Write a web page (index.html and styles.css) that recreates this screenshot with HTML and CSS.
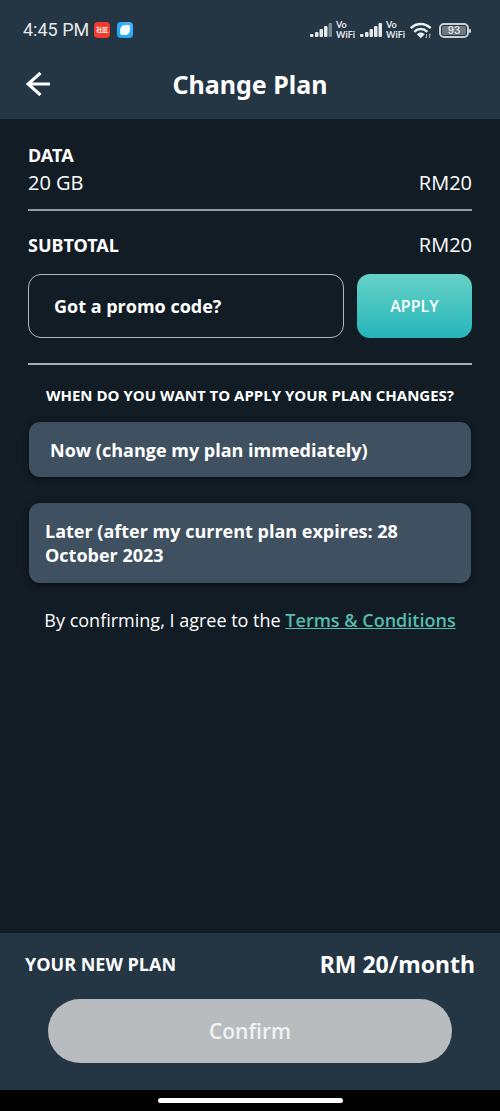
FILE: index.html
```html
<!DOCTYPE html>
<html lang="en">
<head>
<meta charset="utf-8">
<meta name="viewport" content="width=device-width, initial-scale=1">
<title>Change Plan</title>
<link rel="stylesheet" href="styles.css">
</head>
<body>
<div class="screen">
  <header class="top">
    <div class="status">
      <span class="clock">4:45 PM</span>
      <span class="badge">社区</span>
      <svg class="app" viewBox="0 0 16 16" aria-hidden="true">
        <defs><linearGradient id="blue" x1="0" y1="1" x2="1" y2="0"><stop offset="0" stop-color="#0fa6f8"/><stop offset="1" stop-color="#4bb4fa"/></linearGradient></defs>
        <rect width="16" height="16" rx="4" fill="url(#blue)"/>
        <path d="M3 8.500C3 5 5.500 3 8.500 3H11.500Q13 3 13 4.500V7.500C13 11 11 13 7.800 13H5Q3 13 3 11Z" fill="#f4fbff"/>
      </svg>
      <div class="indicators">
        <svg class="signal" viewBox="0 0 22 14" aria-hidden="true">
          <g fill="#e4e8ea"><rect y="11" width="3.500" height="3" rx="1"/><rect x="5" y="9" width="3.500" height="5" rx="1"/><rect x="9.500" y="6" width="3.500" height="8" rx="1"/><rect x="14" y="3" width="3.500" height="11" rx="1"/></g>
          <rect x="18.500" width="3.500" height="14" rx="1" fill="#788690"/>
        </svg>
        <span class="vo">Vo<br>WiFi</span>
        <svg class="signal" viewBox="0 0 22 14" aria-hidden="true">
          <g fill="#e4e8ea"><rect y="11" width="3.500" height="3" rx="1"/><rect x="5" y="9" width="3.500" height="5" rx="1"/><rect x="9.500" y="6" width="3.500" height="8" rx="1"/><rect x="14" y="3" width="3.500" height="11" rx="1"/><rect x="18.500" width="3.500" height="14" rx="1"/></g>
        </svg>
        <span class="vo">Vo<br>WiFi</span>
        <svg class="wifi" viewBox="0 0 22 17" aria-hidden="true">
          <g fill="none" stroke="#e8ecee" stroke-width="2.500"><path d="M.8 6.200C6.500.6 15 .6 20.700 6.200"/><path d="M4.200 9.800C8 6.200 13.500 6.200 17.300 9.800"/></g>
          <path d="M6.800 12.200C9.300 10 12.200 10 14.700 12.200L10.800 16.200Z" fill="#e8ecee"/>
          <path d="M16.500 12V16M15.500 15L16.500 16.200M19.500 16V12L21 13.300" fill="none" stroke="#a5afb6"/>
        </svg>
        <span class="battery"><span class="cell">93</span></span>
      </div>
    </div>
    <div class="bar">
      <button class="back" type="button" aria-label="Back">
        <svg viewBox="0 0 26 26" aria-hidden="true"><path d="M25 13H3M15.500 2L3 13L15.500 24" fill="none" stroke="#fff" stroke-width="3"/></svg>
      </button>
      <h1>Change Plan</h1>
    </div>
  </header>
  <main>
    <section class="data">
      <h2>DATA</h2>
      <div class="row"><span>20 GB</span><span>RM20</span></div>
    </section>
    <section class="subtotal">
      <div class="row"><h2>SUBTOTAL</h2><span>RM20</span></div>
      <form class="promo">
        <input type="text" placeholder="Got a promo code?" aria-label="Got a promo code?">
        <button type="button">APPLY</button>
      </form>
    </section>
    <section class="when">
      <h3>WHEN DO YOU WANT TO APPLY YOUR PLAN CHANGES?</h3>
      <button class="option now" type="button">Now (change my plan immediately)</button>
      <button class="option later" type="button">Later (after my current plan expires: 28 October 2023</button>
    </section>
    <p class="terms">By confirming, I agree to the <a href="#">Terms &amp; Conditions</a></p>
  </main>
  <footer>
    <div class="total"><span>YOUR NEW PLAN</span><strong>RM 20/month</strong></div>
    <button class="confirm" type="button" disabled>Confirm</button>
  </footer>
  <div class="nav"><span></span></div>
</div>
</body>
</html>
```
FILE: styles.css
```css
* { box-sizing: border-box; }
body { margin: 0; background: #121c24; color: #fff; font-family: "Open Sans", sans-serif; }
button, input { font: inherit; color: inherit; border: 0; margin: 0; }
h1, h2, h3, p { margin: 0; }
h1, h2 { font-family: "Noto Sans", sans-serif; font-weight: 700; }
svg { display: block; flex: none; }
.screen { min-height: 100vh; display: flex; flex-direction: column; }
.top { background: #243544; }
.status { display: flex; align-items: center; height: 60px; padding: 0 29px 0 23px; color: #e4e8ea; }
.clock { font: 18px/24px Roboto, sans-serif; margin-right: 5px; }
.badge { width: 16px; height: 16px; border-radius: 4px; background: #f73a2e; font: 700 6px/15px "Noto Sans CJK SC", sans-serif; text-align: center; color: #fff; }
.app { width: 16px; height: 16px; margin-left: 7px; }
.indicators { display: flex; align-items: center; margin-left: auto; gap: 4px; }
.signal { width: 22px; height: 14px; }
.vo { width: 20px; font: 700 9px/10px Lato, sans-serif; }
.wifi { width: 22px; height: 17px; }
.battery { position: relative; width: 30px; height: 15px; margin: 0 2px 0 3px; padding: 1px; border: 2px solid #cbd1d5; border-radius: 5px; }
.battery::after { content: ""; position: absolute; right: -4px; top: 4px; width: 2px; height: 4px; background: #cbd1d5; border-radius: 1px; }
.cell { display: block; background: #6d7983; border-radius: 2px; font: 500 10px/9px Inter, sans-serif; text-align: center; }
.bar { position: relative; display: flex; align-items: center; justify-content: center; height: 59px; padding-bottom: 11px; }
.back { position: absolute; left: 25px; top: 11px; width: 26px; height: 26px; padding: 0; background: none; }
h1 { font-size: 25px; line-height: 36px; }
main { flex: 1; padding: 24px 28px; }
h2 { font-size: 18px; line-height: 24px; }
.row { display: flex; justify-content: space-between; align-items: center; font-size: 20px; line-height: 30px; }
.data { display: grid; gap: 1px; padding-bottom: 11px; border-bottom: 2px solid #8f9da6; }
.subtotal { padding: 19px 0 25px; border-bottom: 2px solid #a9adb5; }
.promo { display: flex; gap: 13px; margin-top: 14px; }
.promo input { flex: 1; min-width: 0; height: 64px; padding: 0 25px; background: transparent; border: 1px solid #aab9c0; border-radius: 13px; font-size: 18px; font-weight: 700; }
.promo input::placeholder { color: #fff; opacity: 1; }
.promo button { width: 115px; border-radius: 13px; background: linear-gradient(#67d2c6, #25b5bb); font-size: 16px; font-weight: 600; }
.when { padding: 18px 1px 0; display: flex; flex-direction: column; }
h3 { font-size: 15px; line-height: 24px; font-weight: 700; text-align: center; margin-bottom: 15px; }
.option { text-align: left; background: #3f5060; border-radius: 11px; font-size: 18px; line-height: 24px; font-weight: 700; box-shadow: 0 2px 6px #0a1016; }
.now { padding: 16px 21px 15px; margin-bottom: 26px; }
.later { padding: 16px 60px 16px 16px; }
.terms { margin-top: 24px; text-align: center; font-size: 18px; line-height: 26px; }
.terms a { color: #55bcae; font-weight: 600; }
footer { background: #243544; padding: 13px 25px 27px; }
.total { display: flex; justify-content: space-between; align-items: center; line-height: 36px; font-size: 18px; font-weight: 700; }
.total strong { font-family: "Noto Sans", sans-serif; font-size: 23px; font-weight: 700; }
.confirm { display: block; width: calc(100% - 46px); height: 64px; margin: 17px auto 0; border-radius: 32px; background: #b8bcbf; color: #f0f2f3; font-size: 21px; font-weight: 600; }
.nav { height: 21px; background: #000; display: flex; justify-content: center; align-items: center; }
.nav span { width: 37%; height: 5px; border-radius: 3px; background: #fff; }
```
